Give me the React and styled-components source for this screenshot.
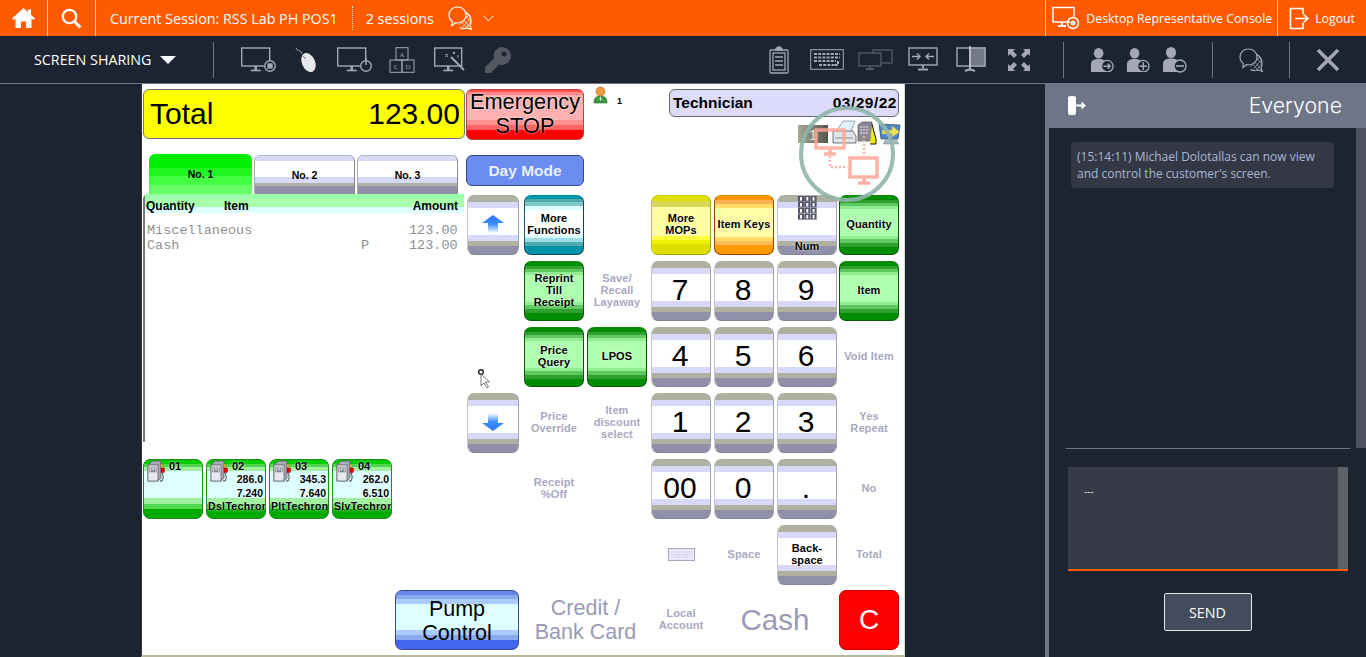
import styled, { createGlobalStyle } from 'styled-components'

const stripes = (head, mid, foot) => {
  let y = 0
  const stops = []
  head.forEach(([c, h]) => {
    stops.push(`${c} ${y}px ${y + h}px`)
    y += h
  })
  let f = foot.reduce((s, b) => s + b[1], 0)
  stops.push(`${mid} ${y}px calc(100% - ${f}px)`)
  foot.forEach(([c, h]) => {
    stops.push(`${c} calc(100% - ${f}px) calc(100% - ${f - h}px)`)
    f -= h
  })
  return `linear-gradient(to bottom, ${stops.join(', ')})`
}

const tones = {
  gray: stripes([['#b0b0a0', 6], ['#d8d8f8', 6]], '#ffffff', [['#d8d8f8', 6], ['#b0b0a0', 5], ['#9090a8', 8]]),
  green: stripes([['#008c00', 4], ['#30a030', 3], ['#60c860', 3], ['#90ee90', 3]], '#b0ffb0', [['#90ee90', 3], ['#60c860', 4], ['#30a030', 4], ['#008c00', 7]]),
  yellow: stripes([['#e0e000', 5], ['#d8d858', 6]], '#ffffa0', [['#ffff40', 4], ['#f0f000', 4], ['#dddd00', 10]]),
  orange: stripes([['#ff9900', 4], ['#ffb050', 4], ['#ffdd66', 4]], '#ffffa8', [['#ffdd66', 4], ['#ffbb55', 4], ['#ff9900', 9]]),
  teal: stripes([['#009aaa', 3], ['#50aaaa', 3], ['#80c8c8', 4], ['#ddffff', 4]], '#ffffff', [['#ddffff', 3], ['#a0dce8', 4], ['#50aaaa', 4], ['#0090a8', 8]]),
  red: stripes([['#ff5050', 2], ['#ff8888', 3]], '#ffb0b0', [['#ff9090', 5], ['#ff6060', 5], ['#ff0000', 9]]),
  blue: stripes([['#6688ee', 4], ['#88aaf0', 4], ['#aaccff', 5]], '#ddffff', [['#aaccff', 5], ['#88aaf0', 5], ['#4466ee', 9]]),
  pump: stripes([['#00cc00', 4], ['#50d850', 3], ['#a0f0a0', 4]], '#ddffff', [['#a0f0a0', 6], ['#50d850', 5], ['#00aa00', 9]]),
  tabOn: stripes([['#00ee00', 14], ['#22f522', 8], ['#44ff44', 9]], '#66ff66', []),
  tabOff: stripes([['#b8b8c8', 1], ['#d8d8f8', 5]], '#ffffff', [['#d8d8f8', 6], ['#b0b0a0', 3], ['#9090a8', 8]]),
}

const keyEdges = {
  gray: '#b0b0a0 #a4a4ac #808098 #c4c4cc',
  green: '#0a8a0a #0a5a0a #0a5a0a #0a5a0a',
  yellow: '#d0d000 #a8a800 #a8a800 #c8c800',
  orange: '#e08800 #a04000 #a04000 #a04000',
  teal: '#008a9a #104858 #104858 #105868',
}

const Global = createGlobalStyle`
  html, body { margin: 0; padding: 0; background: #1c2331; }
  body { font-family: "Open Sans", "Noto Sans", sans-serif; overflow: hidden; }
`

const Page = styled.div`
  width: 1366px;
  height: 657px;
  display: flex;
  flex-direction: column;
  overflow: hidden;
  background: #1c2331;
`
const TopBar = styled.div`
  height: 36px;
  display: flex;
  align-items: stretch;
  background: #ff5a00;
  color: #fff;
  flex-shrink: 0;
`
const TopCell = styled.div`
  display: flex;
  align-items: center;
  width: ${(p) => p.$w}px;
  justify-content: center;
  border-right: 1px solid rgba(255, 255, 255, 0.75);
  box-sizing: border-box;
`
const SessionText = styled.span`
  align-self: center;
  font-size: 14.3px;
  margin-left: ${(p) => p.$ml || 0}px;
  white-space: nowrap;
`
const DotLine = styled.span`
  width: 0;
  height: 24px;
  align-self: center;
  border-left: 1px dotted rgba(255, 255, 255, 0.8);
  margin-left: 14px;
`
const TopGlyph = styled.span`
  display: flex;
  align-items: center;
  margin-left: ${(p) => p.$ml}px;
`
const TopRight = styled.div`
  margin-left: auto;
  display: flex;
`
const TopLink = styled.div`
  display: flex;
  align-items: center;
  gap: ${(p) => p.$gap}px;
  padding: 0 ${(p) => p.$pr}px 0 ${(p) => p.$pl}px;
  font-size: 12.3px;
  border-left: 1px solid rgba(255, 255, 255, 0.75);
  white-space: nowrap;
`
const ToolBar = styled.div`
  height: 47px;
  display: flex;
  align-items: center;
  padding: 0 26px 0 34px;
  border-bottom: 1px solid #6e7587;
  flex-shrink: 0;
`
const ShareLabel = styled.span`
  font-size: 14.3px;
  color: #fff;
  width: 117px;
  white-space: nowrap;
`
const Caret = styled.span`
  width: 0;
  height: 0;
  margin-left: 9px;
  border-left: 8px solid transparent;
  border-right: 8px solid transparent;
  border-top: 8px solid #fff;
`
const Sep = styled.span`
  width: 1px;
  height: 36px;
  background: #6e7587;
  margin-left: ${(p) => p.$ml}px;
`
const Tool = styled.span`
  display: flex;
  width: ${(p) => p.$w}px;
  margin-left: ${(p) => p.$ml}px;
  color: ${(p) => (p.$dim ? '#545862' : '#a3a8b4')};
  svg { display: block; width: 100%; height: auto; }
`
const ToolRight = styled.div`
  margin-left: auto;
  display: flex;
  align-items: center;
`
const Main = styled.div`
  flex: 1;
  min-height: 0;
  display: flex;
  padding-left: 141px;
`
const Pos = styled.div`
  position: relative;
  width: 764px;
  height: 573px;
  margin-right: 140px;
  box-sizing: border-box;
  background: #fff;
  border-left: 1px solid #333;
  border-right: 1px solid #d8d8c8;
  border-bottom: 2px solid #b8b8a0;
  padding: 5px 0 0 1px;
  display: grid;
  grid-template-columns: 324px 57px 63px 64px 63px 63px 62px 60px;
  grid-template-rows: 66px 40px 66px 66px 66px 66px 66px 65px 60px;
  font-family: "Liberation Sans", Arial, sans-serif;
  color: #000;
`
const TotalBox = styled.div`
  height: 50px;
  box-sizing: border-box;
  width: 322px;
  grid-column: 1;
  grid-row: 1;
  display: flex;
  justify-content: space-between;
  align-items: center;
  padding: 0 4px 0 6px;
  background: #ffff00;
  border: 1px solid #777;
  border-radius: 6px;
  font-size: 30px;
`
const Emergency = styled.div`
  grid-column: 2 / 4;
  grid-row: 1;
  width: 118px;
  height: 51px;
  margin-left: -1px;
  box-sizing: border-box;
  border-radius: 6px;
  border: 1px solid #c04040;
  background: ${tones.red};
  font-size: 21.8px;
  line-height: 24px;
  text-align: center;
  text-shadow: 0 0 2px #fff;
`
const Operator = styled.div`
  grid-column: 4;
  grid-row: 1;
  display: flex;
  align-items: flex-start;
  gap: 9px;
  padding-left: 6px;
  margin-top: -3px;
  font-size: 9px;
  font-weight: bold;
  span { margin-top: 10px; }
`
const Status = styled.div`
  grid-column: 5 / 9;
  grid-row: 1;
  margin-left: 18px;
  display: flex;
  flex-direction: column;
`
const Technician = styled.div`
  height: 28px;
  box-sizing: border-box;
  display: flex;
  justify-content: space-between;
  align-items: center;
  padding: 0 1px 0 3px;
  background: #dcdcfa;
  border: 1px solid #666;
  border-radius: 6px;
  font-size: 15.5px;
  font-weight: bold;
`
const DateText = styled.span`
  letter-spacing: 0.5px;
`
const StatusIcons = styled.div`
  display: flex;
  justify-content: flex-end;
  align-items: center;
  margin: 3px -2px 0 0;
`
const Tabs = styled.div`
  grid-column: 1;
  grid-row: 2;
  display: flex;
  align-items: flex-end;
  gap: 2px;
  padding-left: 6px;
  height: 40px;
  margin-top: -1px;
`
const Tab = styled.div`
  width: ${(p) => (p.$on ? 103 : 101)}px;
  height: ${(p) => (p.$on ? 40 : 39)}px;
  box-sizing: border-box;
  display: flex;
  align-items: center;
  justify-content: center;
  border-radius: 6px 6px 0 0;
  background: ${(p) => (p.$on ? tones.tabOn : tones.tabOff)};
  border-right: 1px solid ${(p) => (p.$on ? 'transparent' : '#888')};
  border-left: 1px solid ${(p) => (p.$on ? 'transparent' : '#aaa')};
  font-size: 10.5px;
  font-weight: bold;
`
const DayMode = styled.div`
  grid-column: 2 / 4;
  grid-row: 2;
  width: 118px;
  height: 31px;
  margin-left: -1px;
  box-sizing: border-box;
  display: flex;
  align-items: center;
  justify-content: center;
  background: #6b8cf0;
  border: 1px solid #3a4a88;
  border-radius: 6px;
  color: #e8f0ff;
  font-size: 15.5px;
  font-weight: bold;
`
const List = styled.div`
  grid-column: 1;
  grid-row: 3 / 7;
  width: 321px;
  height: 248px;
  margin-top: -1px;
  border-left: 2px solid #777;
  box-sizing: border-box;
  border-radius: 5px 0 0 0;
`
const ListHead = styled.div`
  height: 19px;
  box-sizing: border-box;
  padding: 4px 6px 0 1px;
  display: grid;
  grid-template-columns: 78px 1fr auto;
  align-items: center;
  background: ${stripes([['#99ffaa', 5], ['#aaffaa', 8]], '#ddffff', [])};
  font-size: 12px;
  font-weight: bold;
`
const ListRow = styled.div`
  display: grid;
  grid-template-columns: 1fr 48px 51px;
  padding: 0 4px 0 2px;
  font-family: "Liberation Mono", monospace;
  font-size: 13.5px;
  line-height: 15px;
  color: #909090;
  white-space: pre;
`
const Rows = styled.div`
  padding-top: 10px;
`
const Key = styled.div`
  grid-column: ${(p) => p.$col};
  grid-row: ${(p) => p.$row};
  width: ${(p) => p.$w || 60}px;
  height: 60px;
  box-sizing: border-box;
  padding: ${(p) => (p.$big ? '0 2px 2px 0' : '0 0 2px 0')};
  display: flex;
  align-items: center;
  justify-content: center;
  text-align: center;
  border-radius: 7px;
  border: 1px solid;
  border-color: ${(p) => keyEdges[p.$tone]};
  background: ${(p) => tones[p.$tone]};
  font-size: ${(p) => (p.$big ? 30 : 11)}px;
  font-weight: ${(p) => (p.$big ? 'normal' : 'bold')};
  line-height: ${(p) => (p.$big ? 32 : 12)}px;
  letter-spacing: ${(p) => (p.$big ? 0 : 0.1)}px;
  white-space: pre-line;
  text-shadow: ${(p) => (p.$big ? 'none' : '0 0 2px #fff')};
`
const NumKey = styled(Key)`
  flex-direction: column;
  justify-content: flex-start;
  padding: 0;
  em {
    font-style: normal;
    margin-top: 20px;
  }
`
const Ghost = styled.div`
  grid-column: ${(p) => p.$col};
  grid-row: ${(p) => p.$row};
  width: 60px;
  height: 60px;
  box-sizing: border-box;
  padding: 0 0 2px 0;
  display: flex;
  align-items: center;
  justify-content: center;
  text-align: center;
  color: #a8a8c0;
  font-size: 11px;
  font-weight: bold;
  line-height: 12px;
  letter-spacing: 0.1px;
  white-space: pre-line;
`
const GhostBig = styled.div`
  grid-column: ${(p) => p.$col};
  grid-row: ${(p) => p.$row};
  width: ${(p) => p.$w}px;
  height: 60px;
  display: flex;
  align-items: center;
  justify-content: center;
  text-align: center;
  color: #9a9ab4;
  font-size: ${(p) => p.$size}px;
  line-height: 24px;
`
const PumpRow = styled.div`
  grid-column: 1;
  grid-row: 7;
  display: flex;
  gap: 3px;
`
const PumpTile = styled.div`
  position: relative;
  width: 60px;
  height: 60px;
  box-sizing: border-box;
  padding: 0 2px;
  border-radius: 7px;
  border: 1px solid #1c8c1c;
  background: ${tones.pump};
  font-size: 10.5px;
  font-weight: bold;
  line-height: 13.4px;
  text-align: right;
  overflow: hidden;
  text-shadow: 0 0 2px #fff;
`
const PumpNo = styled.div`
  text-align: left;
  padding-left: 23px;
  font-size: 11px;
`
const PumpName = styled.div`
  text-align: left;
  white-space: nowrap;
  margin: 0 -2px 0 -1px;
  overflow: hidden;
  letter-spacing: 0.35px;
`
const PumpGlyph = styled.span`
  position: absolute;
  left: 2px;
  top: 0;
  display: block;
  line-height: 0;
`
const PumpControl = styled.div`
  grid-column: 1 / 3;
  grid-row: 9;
  justify-self: end;
  width: 124px;
  height: 60px;
  margin-right: 5px;
  box-sizing: border-box;
  border: 1px solid #3a4a88;
  border-radius: 7px;
  background: ${tones.blue};
  font-size: 21.5px;
  line-height: 24px;
  text-align: center;
  padding-top: 6px;
`
const ClearKey = styled.div`
  grid-column: 8;
  grid-row: 9;
  width: 60px;
  height: 60px;
  box-sizing: border-box;
  display: flex;
  align-items: center;
  justify-content: center;
  background: #ff0000;
  border: 1px solid #cc0000;
  border-radius: 7px;
  color: #fff;
  font-size: 28px;
`
const Watermark = styled.svg`
  position: absolute;
  left: 654px;
  top: 20px;
  pointer-events: none;
`
const Cursor = styled.svg`
  position: absolute;
  left: 334px;
  top: 284px;
`
const Chat = styled.div`
  width: 321px;
  box-sizing: border-box;
  border-left: 4px solid #6e7587;
  display: flex;
  flex-direction: column;
`
const ChatHead = styled.div`
  height: 44px;
  flex-shrink: 0;
  margin-left: -1px;
  background: #6e7587;
  display: flex;
  align-items: center;
  justify-content: space-between;
  padding: 0 24px 2px 20px;
  box-sizing: border-box;
  color: #fff;
  font-family: Inter, "Open Sans", sans-serif;
  font-weight: 300;
  font-size: 21.3px;
`
const ChatBody = styled.div`
  height: 320px;
  flex-shrink: 0;
  display: flex;
`
const Messages = styled.div`
  flex: 1;
  padding: 14px 22px 0;
`
const Bubble = styled.div`
  height: 46px;
  box-sizing: border-box;
  padding: 6px 6px;
  background: #343744;
  border-radius: 4px;
  color: #a9b8d6;
  font-size: 12px;
  line-height: 17px;
`
const ScrollThumb = styled.div`
  width: 10px;
  background: #4e5260;
`
const Divider = styled.div`
  height: 1px;
  margin: 0 16px 0 17px;
  background: #6e7587;
`
const Composer = styled.div`
  width: 280px;
  height: 104px;
  margin: 18px 0 0 19px;
  box-sizing: border-box;
  background: #373b47;
  border-bottom: 2px solid #ff5a00;
  display: flex;
  justify-content: space-between;
`
const Draft = styled.div`
  padding: 15px 16px;
  color: #e8e8e8;
  font-size: 10px;
  line-height: 18px;
`
const ComposerBar = styled.div`
  width: 10px;
  background: #5e616a;
`
const Send = styled.div`
  align-self: center;
  width: 88px;
  height: 38px;
  margin-top: 22px;
  box-sizing: border-box;
  display: flex;
  align-items: center;
  justify-content: center;
  background: #434c5c;
  border: 1px solid #e4e6ea;
  border-radius: 2px;
  color: #fff;
  font-size: 14.3px;
`

const Outline = ({ w, h, children, sw = 1.4 }) => (
  <svg width={w} height={h} viewBox={`0 0 ${w} ${h}`} fill="none" stroke="currentColor" strokeWidth={sw}>
    {children}
  </svg>
)
const Screen = ({ x = 0.7, y = 1, w = 28, h = 18 }) => (
  <>
    <rect x={x} y={y} width={w} height={h} />
    <path d={`M${x + w / 2} ${y + h}v4`} strokeWidth="2.5" />
    <path d={`M${x + w / 2 - 5} ${y + h + 4.5}h10`} strokeWidth="1.6" />
  </>
)
// two talk bubbles, the back one filled with a net
const ChatIcon = ({ w = 24, bg }) => (
  <svg width={w} height={w} viewBox="0 0 24 24" fill="none" stroke="currentColor" strokeWidth="1.2">
    <clipPath id="netclip">
      <path d="M10 6c6-2 13 2 13 9 0 2-.5 4-1 5l1.500 3.500-4-1.500c-3 1-6 1-8-.5z" />
    </clipPath>
    <path d="M10 6c6-2 13 2 13 9 0 2-.5 4-1 5l1.500 3.500-4-1.500c-3 1-6 1-8-.5" />
    <g clipPath="url(#netclip)" strokeWidth=".7">
      <path d="M8 6l16 17M8 10l14 15M12 4l13 14M16 3l9 10M24 6L8 22M24 10L11 25M24 14l-9 11M20 4L7 18" />
    </g>
    <path d="M9.500 1C14.500 1 18 4.500 18 9s-3.500 8-8.500 8c-.8 0-1.500-.1-2.200-.3L4 19.500l.3-4C2.300 14 1 11.800 1 9c0-4.500 3.500-8 8.500-8z" fill={bg} />
  </svg>
)
const UserIcon = ({ mark }) => (
  <svg viewBox="0 0 25 27" fill="currentColor">
    <ellipse cx="9" cy="6.500" rx="5" ry="5.500" />
    <path d="M1 26v-8c0-4 3-5.500 8-5.500s8 1.500 8 5.500v8z" />
    <circle cx="18" cy="20" r="6" fill="#1c2331" stroke="currentColor" strokeWidth="1.4" />
    <path d={mark} stroke="currentColor" strokeWidth="1.6" fill="none" />
  </svg>
)
const PumpIcon = () => (
  <svg width="20" height="23" viewBox="0 0 20 23">
    <path d="M2 5l4-4h9v17l-3 3H2z" fill="#a8a8b8" stroke="#555" strokeWidth=".7" />
    <rect x="2" y="5" width="10" height="16" fill="#e8e8f0" stroke="#555" strokeWidth=".7" />
    <rect x="3.500" y="7" width="7" height="5" fill="#c8c8d4" stroke="#777" strokeWidth=".5" />
    <path d="M5 9h1M8 9h1M5 11h4" stroke="#333" strokeWidth=".7" />
    <path d="M15 4h2v4h-2z" fill="#ec0" stroke="#555" strokeWidth=".4" />
    <rect x="15" y="8" width="3.500" height="4.500" fill="#e00" stroke="#700" strokeWidth=".4" />
    <path d="M16 12.500c1 3 2 5 0 8.500h-2" stroke="#222" fill="none" strokeWidth=".9" />
  </svg>
)
const ArrowIcon = ({ down }) => (
  <svg width="24" height="20" viewBox="0 0 24 20" style={down ? { transform: 'scaleY(-1)' } : undefined}>
    <defs>
      <linearGradient id={down ? 'ad' : 'au'} x1="0" y1="0" x2="0" y2="1">
        <stop offset="0" stopColor="#2a78ff" />
        <stop offset=".5" stopColor="#3a8cff" />
        <stop offset="1" stopColor="#ffffff" />
      </linearGradient>
    </defs>
    <path d="M12 1L23 9H17V19H7V9H1z" fill={`url(#${down ? 'ad' : 'au'})`} />
  </svg>
)

const numGrid = [0, 1, 2, 3]
const bigKeys = [
  ['7', 5, 4], ['8', 6, 4], ['9', 7, 4],
  ['4', 5, 5], ['5', 6, 5], ['6', 7, 5],
  ['1', 5, 6], ['2', 6, 6], ['3', 7, 6],
  ['00', 5, 7], ['0', 6, 7], ['.', 7, 7],
]
const smallKeys = [
  ['More\nFunctions', 3, 3, 'teal'],
  ['More\nMOPs', 5, 3, 'yellow'],
  ['Item Keys', 6, 3, 'orange'],
  ['Quantity', 8, 3, 'green'],
  ['Reprint\nTill\nReceipt', 3, 4, 'green'],
  ['Item', 8, 4, 'green'],
  ['Price\nQuery', 3, 5, 'green'],
  ['LPOS', 4, 5, 'green'],
  ['Back-\nspace', 7, 8, 'gray'],
]
const ghosts = [
  ['Save/\nRecall\nLayaway', 4, 4],
  ['Void Item', 8, 5],
  ['Price\nOverride', 3, 6],
  ['Item\ndiscount\nselect', 4, 6],
  ['Yes\nRepeat', 8, 6],
  ['Receipt\n%Off', 3, 7],
  ['No', 8, 7],
  ['Space', 6, 8],
  ['Total', 8, 8],
  ['Local\nAccount', 5, 9],
]
const pumps = [
  { no: '01' },
  { no: '02', vol: '286.0', price: '7.240', name: 'DslTechron' },
  { no: '03', vol: '345.3', price: '7.640', name: 'PltTechron' },
  { no: '04', vol: '262.0', price: '6.510', name: 'SlvTechron' },
]

export default function App() {
  return (
    <Page>
      <Global />
      <TopBar>
        <TopCell $w={48}>
          <svg width="23" height="20" viewBox="0 0 23 20" fill="#fff">
            <path d="M11.500 0L0 10.500l1.500 1.500L3.500 10.200V20H9v-6.500h5V20h5.500V10.200L21.500 12 23 10.500 19 6.800V1.500h-3v2.600z" />
          </svg>
        </TopCell>
        <TopCell $w={48}>
          <svg width="21" height="21" viewBox="0 0 21 21" fill="none" stroke="#fff">
            <circle cx="8.500" cy="8.500" r="6.700" strokeWidth="2.300" />
            <path d="M13.500 13.500l6 6" strokeWidth="3" />
          </svg>
        </TopCell>
        <SessionText $ml={14}>Current Session: RSS Lab PH POS1</SessionText>
        <DotLine />
        <SessionText $ml={13}>2 sessions</SessionText>
        <TopGlyph $ml={14}>
          <ChatIcon bg="#ff5a00" />
        </TopGlyph>
        <TopGlyph $ml={11}>
          <svg width="11" height="7" viewBox="0 0 11 7" fill="none" stroke="#fff">
            <path d="M.7 1l4.800 4.800L10.300 1" />
          </svg>
        </TopGlyph>
        <TopRight>
          <TopLink $pl={6} $pr={5} $gap={7}>
            <svg width="27" height="24" viewBox="0 0 27 24" fill="none" stroke="#fff" strokeWidth="1.500">
              <path d="M18 16H1V1.500h21v9" />
              <path d="M10 16v3M6 20h8" strokeWidth="2" />
              <circle cx="21" cy="17" r="5.500" />
              <circle cx="21" cy="17" r="2.500" fill="#fff" stroke="none" />
            </svg>
            Desktop Representative Console
          </TopLink>
          <TopLink $pl={11} $pr={11} $gap={6}>
            <svg width="20" height="23" viewBox="0 0 20 23" fill="none" stroke="#fff" strokeWidth="1.600">
              <path d="M14 7V1.500H1.500v20H14V16" />
              <path d="M6 11.500h13M14.500 7.500l4.500 4-4.500 4" />
            </svg>
            Logout
          </TopLink>
        </TopRight>
      </TopBar>

      <ToolBar>
        <ShareLabel>SCREEN SHARING</ShareLabel>
        <Caret />
        <Sep $ml={37} />
        <Tool $w={35} $ml={27}>
          <Outline w={35} h={26}>
            <Screen />
            <circle cx="29" cy="19" r="5.300" fill="#1c2331" />
            <rect x="27" y="17" width="4" height="4" fill="currentColor" />
          </Outline>
        </Tool>
        <Tool $w={22} $ml={19}>
          <svg viewBox="0 0 22 26" fill="none">
            <path d="M1 1c2 5 4 0 6 6" stroke="#a3a8b4" />
            <ellipse cx="13.500" cy="15.500" rx="6.500" ry="10" transform="rotate(-24 13.500 15.500)" fill="#e6e8ec" />
            <path d="M8 9l3 3" stroke="#777" />
          </svg>
        </Tool>
        <Tool $w={35} $ml={20}>
          <Outline w={35} h={26}>
            <Screen />
            <circle cx="29" cy="19" r="5.300" fill="#1c2331" />
            <path d="M29 11v7" />
          </Outline>
        </Tool>
        <Tool $w={26} $ml={17}>
          <svg viewBox="0 0 26 26" fill="none" stroke="currentColor" fontFamily="Liberation Serif, serif" fontSize="7">
            <rect x="7" y=".7" width="12" height="12.300" />
            <rect x="1" y="13" width="12" height="12.300" />
            <rect x="13" y="13" width="12" height="12.300" />
            <text x="13" y="9.500" textAnchor="middle" fill="currentColor" stroke="none">A</text>
            <text x="7" y="22" textAnchor="middle" fill="currentColor" stroke="none">C</text>
            <text x="19" y="22" textAnchor="middle" fill="currentColor" stroke="none">D</text>
          </svg>
        </Tool>
        <Tool $w={32} $ml={19}>
          <Outline w={32} h={26}>
            <Screen w={27} />
            <path d="M17 10l13 13" strokeWidth="2" />
            <path d="M11 7l3 3M14 7l-3 3M19 5l2 2M21 5l-2 2M24 8v3" strokeWidth="1" />
          </Outline>
        </Tool>
        <Tool $w={26} $ml={19} $dim>
          <svg viewBox="0 0 26 26" fill="currentColor">
            <path d="M17 0a9 9 0 0 1 0 18c-1 0-2-.2-3-.5L6 26H0v-6l9-8.500A9 9 0 0 1 17 0z" />
            <circle cx="19" cy="7" r="2.500" fill="#1c2331" />
          </svg>
        </Tool>
        <ToolRight>
          <Tool $w={20}>
            <svg viewBox="0 0 20 28" fill="none" stroke="currentColor" strokeWidth="1.300">
              <rect x="1" y="4" width="18" height="23" rx="1" />
              <rect x="4" y="7" width="12" height="17" />
              <path d="M7 4V2.500L10 .8l3 1.700V4z" fill="currentColor" />
              <path d="M6 11h8M6 15h8M6 19h8" />
            </svg>
          </Tool>
          <Tool $w={34} $ml={21}>
            <svg viewBox="0 0 34 21" fill="none" stroke="currentColor">
              <rect x=".7" y=".7" width="32.600" height="19.600" />
              <path d="M4 5h26M4 8.500h26M4 12h22M9 16h16M28 12v4h-3" strokeWidth="2.200" strokeDasharray="3 1.200" />
            </svg>
          </Tool>
          <Tool $w={35} $ml={14} $dim>
            <Outline w={35} h={21}>
              <rect x="15" y="1" width="19" height="13" />
              <rect x="1" y="4" width="22" height="13" fill="#1c2331" />
              <path d="M12 17v2M8 20h8" strokeWidth="2" />
            </Outline>
          </Tool>
          <Tool $w={30} $ml={15}>
            <Outline w={30} h={25}>
              <rect x="1" y="1" width="28" height="17" />
              <path d="M4 9.500h8M9 6.500l3 3-3 3M26 9.500h-8M21 6.500l-3 3 3 3" />
              <path d="M15 18v3M10 22.500h10" strokeWidth="2" />
            </Outline>
          </Tool>
          <Tool $w={30} $ml={18}>
            <svg viewBox="0 0 30 27" fill="none" stroke="currentColor" strokeWidth="1.400">
              <rect x="1" y="2" width="28" height="18" />
              <rect x="14" y="2" width="15" height="18" fill="currentColor" opacity=".65" />
              <path d="M14 0v25" stroke="#d8dbe2" />
              <path d="M9 25l5-2 5 2" strokeWidth="2" />
            </svg>
          </Tool>
          <Tool $w={22} $ml={22}>
            <svg viewBox="0 0 22 22" fill="currentColor">
              <path d="M0 0h7L5 2l4 4-3 3-4-4-2 2zM22 0v7l-2-2-4 4-3-3 4-4-2-2zM0 22v-7l2 2 4-4 3 3-4 4 2 2zM22 22h-7l2-2-4-4 3-3 4 4 2-2z" />
            </svg>
          </Tool>
          <Sep $ml={33} />
          <Tool $w={24} $ml={26}>
            <UserIcon mark="M14 20h7M18.500 17.500l2.500 2.500-2.500 2.500" />
          </Tool>
          <Tool $w={24} $ml={12}>
            <UserIcon mark="M14 20h8M18 16v8" />
          </Tool>
          <Tool $w={25} $ml={12}>
            <UserIcon mark="M14 20h8" />
          </Tool>
          <Sep $ml={25} />
          <Tool $w={24} $ml={26}>
            <ChatIcon bg="#1c2331" />
          </Tool>
          <Sep $ml={26} />
          <Tool $w={24} $ml={26}>
            <svg viewBox="0 0 24 24" fill="none" stroke="currentColor" strokeWidth="3.600">
              <path d="M2 2l20 20M22 2L2 22" />
            </svg>
          </Tool>
        </ToolRight>
      </ToolBar>

      <Main>
        <Pos>
          <TotalBox>
            <span>Total</span>
            <span>123.00</span>
          </TotalBox>
          <Emergency>
            Emergency
            <br />
            STOP
          </Emergency>
          <Operator>
            <svg width="15" height="18" viewBox="0 0 15 18">
              <path d="M1 17c0-5 2-7 6.500-7s6.500 2 6.500 7z" fill="#3a9a3a" stroke="#226622" strokeWidth=".6" />
              <circle cx="7.500" cy="5.500" r="4.500" fill="#f09a40" stroke="#a86820" strokeWidth=".6" />
              <path d="M7.500 10l-1 3 1 2 1-2z" fill="#fff" />
            </svg>
            <span>1</span>
          </Operator>
          <Status>
            <Technician>
              <span>Technician</span>
              <DateText>03/29/22</DateText>
            </Technician>
            <StatusIcons>
              <svg width="103" height="26" viewBox="0 0 103 26">
                <defs>
                  <linearGradient id="cnt" x1="0" y1="0" x2="1" y2="0">
                    <stop offset="0" stopColor="#a8a898" />
                    <stop offset="1" stopColor="#55554a" />
                  </linearGradient>
                </defs>
                <rect x="0" y="5" width="30" height="18" fill="url(#cnt)" />
                <text x="15" y="20" fontSize="15" fill="#e4e4e4" textAnchor="middle" fontFamily="Liberation Sans">1</text>
                <path d="M38 12l7-11h12l-4 11z" fill="#dff2fc" stroke="#789" strokeWidth=".7" />
                <path d="M35 11h20l3 5v7H35z" fill="#e0e4e8" stroke="#555" strokeWidth=".8" />
                <path d="M37 18h18" stroke="#889" />
                <path d="M60 5l4-3h10v19h-14z" fill="#8a8a94" stroke="#444" strokeWidth=".6" />
                <path d="M62 7h9M62 10h9M62 13h9" stroke="#eee" strokeDasharray="2 1" />
                <path d="M74 4l2 8 2 7v5h-6" stroke="#111" fill="#ee0" strokeWidth="1" />
                <path d="M81 4l21 1-2 14H83z" fill="#4f86cc" stroke="#345" strokeWidth=".7" />
                <path d="M84 10h10V6l8 6-8 5v-3H84z" fill="#ece050" stroke="#997" strokeWidth=".4" />
                <path d="M88 19h10l3 5H85z" fill="#a8b8c8" stroke="#678" strokeWidth=".4" />
              </svg>
            </StatusIcons>
          </Status>

          <Tabs>
            <Tab $on>No. 1</Tab>
            <Tab>No. 2</Tab>
            <Tab>No. 3</Tab>
          </Tabs>
          <DayMode>Day Mode</DayMode>

          <List>
            <ListHead>
              <span>Quantity</span>
              <span>Item</span>
              <span>Amount</span>
            </ListHead>
            <Rows>
              <ListRow>
                <span>Miscellaneous</span>
                <span />
                <span>123.00</span>
              </ListRow>
              <ListRow>
                <span>Cash</span>
                <span>P</span>
                <span>123.00</span>
              </ListRow>
            </Rows>
          </List>

          <Key $col={2} $row={3} $w={52} $tone="gray">
            <ArrowIcon />
          </Key>
          <Key $col={2} $row={6} $w={52} $tone="gray">
            <ArrowIcon down />
          </Key>
          {smallKeys.map(([label, col, row, tone]) => (
            <Key key={label} $col={col} $row={row} $tone={tone}>
              {label}
            </Key>
          ))}
          <NumKey $col={7} $row={3} $tone="gray">
            <svg width="19" height="24" viewBox="0 0 19 24">
              {numGrid.map((r) =>
                [0, 1, 2].map((c) => (
                  <g key={`${r}-${c}`}>
                    <rect x={c * 6.300} y={r * 6} width="6" height="5.600" fill="#55556a" />
                    <rect x={c * 6.300 + 2} y={r * 6 + 1} width="2" height="3.600" fill="#f4f4f4" />
                  </g>
                ))
              )}
            </svg>
            <em>Num</em>
          </NumKey>
          {bigKeys.map(([label, col, row]) => (
            <Key key={label} $col={col} $row={row} $tone="gray" $big>
              {label}
            </Key>
          ))}
          {ghosts.map(([label, col, row]) => (
            <Ghost key={label} $col={col} $row={row}>
              {label}
            </Ghost>
          ))}
          <Ghost $col={5} $row={8}>
            <svg width="27" height="13" viewBox="0 0 27 13">
              <rect x=".5" y=".5" width="26" height="12" fill="#e8e8fa" stroke="#a8a8c0" />
              <path d="M3 4h21M3 6.500h21M5 9h17" stroke="#c8c8e0" strokeDasharray="1 1" />
            </svg>
          </Ghost>

          <PumpRow>
            {pumps.map((p) => (
              <PumpTile key={p.no}>
                <PumpGlyph>
                  <PumpIcon />
                </PumpGlyph>
                <PumpNo>{p.no}</PumpNo>
                {p.vol && (
                  <>
                    <div>{p.vol}</div>
                    <div>{p.price}</div>
                    <PumpName>{p.name}</PumpName>
                  </>
                )}
              </PumpTile>
            ))}
          </PumpRow>

          <PumpControl>
            Pump
            <br />
            Control
          </PumpControl>
          <GhostBig $col="3 / 5" $row={9} $w={123} $size={21.5}>
            Credit /
            <br />
            Bank Card
          </GhostBig>
          <GhostBig $col="6 / 8" $row={9} $w={122} $size={29.5}>
            Cash
          </GhostBig>
          <ClearKey>C</ClearKey>

          <Watermark width="104" height="104" viewBox="0 0 104 104">
            <circle cx="51" cy="50" r="46" fill="none" stroke="#8fb5a8" strokeWidth="4" opacity=".9" />
            <g fill="none" stroke="#ffa898" strokeWidth="3.500" opacity=".85">
              <rect x="20" y="26" width="28" height="18" />
              <path d="M34 44v5M28 50h12" />
              <rect x="54" y="54" width="27" height="19" />
              <path d="M68 73v5M62 79h12" />
              <path d="M34 52v11h17M68 50V28" strokeDasharray="2 2" strokeWidth="2.500" />
            </g>
          </Watermark>
          <Cursor width="16" height="22" viewBox="0 0 16 22">
            <circle cx="5" cy="4" r="2.300" fill="#fff" stroke="#222" strokeWidth="1.400" />
            <path d="M5 6v12l3-3 3 5 1.500-1-3-5h4z" fill="#fff" stroke="#555" strokeWidth=".8" />
          </Cursor>
        </Pos>

        <Chat>
          <ChatHead>
            <svg width="18" height="19" viewBox="0 0 18 19" fill="#fff">
              <rect x="0" y="0" width="8" height="19" rx="2" />
              <path d="M7 8.500h6.500V5.500l4.500 4-4.500 4v-3H7z" />
            </svg>
            Everyone
          </ChatHead>
          <ChatBody>
            <Messages>
              <Bubble>
                (15:14:11) Michael Dolotallas can now view and control the customer's screen.
              </Bubble>
            </Messages>
            <ScrollThumb />
          </ChatBody>
          <Divider />
          <Composer>
            <Draft>---</Draft>
            <ComposerBar />
          </Composer>
          <Send>SEND</Send>
        </Chat>
      </Main>
    </Page>
  )
}
